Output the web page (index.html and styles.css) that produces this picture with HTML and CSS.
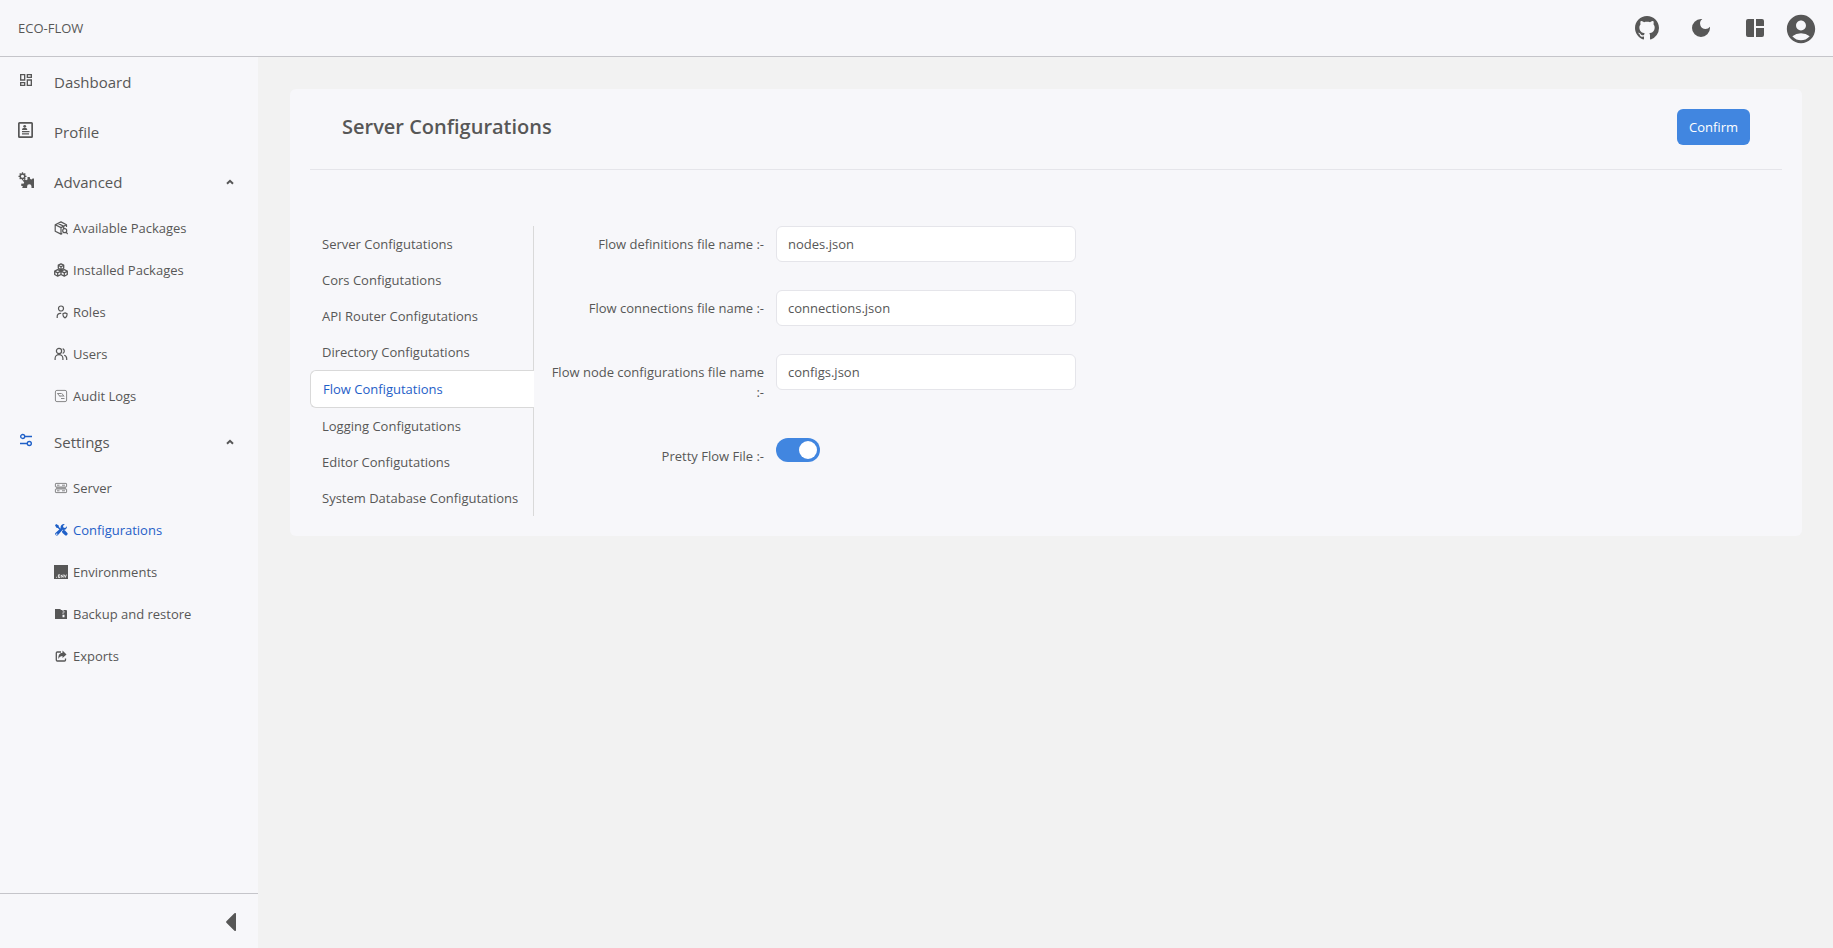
FILE: index.html
```html
<!DOCTYPE html>
<html lang="en">
<head>
<meta charset="utf-8">
<title>ECO-FLOW</title>
<link rel="stylesheet" href="styles.css">
</head>
<body>
<header class="topbar">
  <div class="brand">ECO-FLOW</div>
  <div class="tools">
    <button class="tool" type="button" aria-label="GitHub"><svg class="icon-lg" viewBox="0 0 16 16"><path d="M8 0C3.58 0 0 3.58 0 8c0 3.54 2.29 6.53 5.47 7.59.4.07.55-.17.55-.38 0-.19-.01-.82-.01-1.49-2.01.37-2.53-.49-2.69-.94-.09-.23-.48-.94-.82-1.13-.28-.15-.68-.52-.01-.53.63-.01 1.08.58 1.23.82.72 1.21 1.87.87 2.33.66.07-.52.28-.87.51-1.07-1.78-.2-3.64-.89-3.64-3.95 0-.87.31-1.59.82-2.15-.08-.2-.36-1.02.08-2.12 0 0 .67-.21 2.2.82.64-.18 1.32-.27 2-.27s1.36.09 2 .27c1.53-1.04 2.2-.82 2.2-.82.44 1.1.16 1.92.08 2.12.51.56.82 1.27.82 2.15 0 3.07-1.87 3.75-3.65 3.95.29.25.54.73.54 1.48 0 1.07-.01 1.93-.01 2.2 0 .21.15.46.55.38A8.01 8.01 0 0 0 16 8c0-4.42-3.58-8-8-8z"/></svg></button>
    <button class="tool" type="button" aria-label="Dark mode"><svg class="icon-lg" viewBox="0 0 24 24"><path d="M12 3a9 9 0 1 0 9 9c0-.46-.04-.92-.1-1.36a5.389 5.389 0 0 1-4.4 2.26 5.403 5.403 0 0 1-3.14-9.8c-.44-.06-.9-.1-1.36-.1z"/></svg></button>
    <button class="tool" type="button" aria-label="Layout"><svg class="icon-lg" viewBox="0 0 24 24"><path d="M11 21H5a2 2 0 0 1-2-2V5a2 2 0 0 1 2-2h6zM13 21h6a2 2 0 0 0 2-2v-7h-8zM21 10V5a2 2 0 0 0-2-2h-6v7z"/></svg></button>
    <button class="tool account" type="button" aria-label="Account"><svg class="icon-xl" viewBox="0 0 24 24"><path d="M12 2C6.480 2 2 6.480 2 12s4.480 10 10 10 10-4.480 10-10S17.520 2 12 2zm0 4c1.930 0 3.500 1.570 3.500 3.500S13.930 13 12 13s-3.500-1.570-3.500-3.500S10.070 6 12 6zm0 14c-2.030 0-4.430-.820-6.140-2.880a9.947 9.947 0 0 1 12.280 0C16.430 19.180 14.030 20 12 20z"/></svg></button>
  </div>
</header>
<div class="body">
  <aside class="sidebar">
    <nav class="nav">
      <a class="item" href="#"><svg class="icon" viewBox="0 0 24 24"><path d="M19 5v2h-4V5h4M9 5v6H5V5h4m10 8v6h-4v-6h4M9 17v2H5v-2h4M21 3h-8v6h8V3zM11 3H3v10h8V3zm10 8h-8v10h8V11zm-10 4H3v6h8v-6z"/></svg><span>Dashboard</span></a>
      <a class="item" href="#"><svg class="icon" viewBox="0 0 16 16"><path fill-rule="evenodd" d="M1.500 0h12A1.500 1.500 0 0 1 15 1.500v13a1.500 1.500 0 0 1-1.500 1.500h-12A1.500 1.500 0 0 1 0 14.500v-13A1.500 1.500 0 0 1 1.500 0zm.2 1.700v12.600h11.600V1.700z"/><circle cx="6.700" cy="4.300" r="1.400"/><path d="M4 8c0-1.500 1-2.200 2.700-2.200S9.300 6.500 9.300 8zM4 9h7.500v1.200H4zM4 11.200h7v1.200H4z"/></svg><span>Profile</span></a>
      <button class="item" type="button" aria-expanded="true"><svg class="icon" viewBox="0 0 16 16"><circle cx="4.500" cy="4.300" r="2.300" fill="none" stroke="currentColor" stroke-width="1.500"/><path d="M4.500 .3v2M4.500 6.300v2M.5 4.300h2M6.500 4.300h2M1.700 1.500l1.200 1.200M6.100 5.900l1.200 1.200M7.300 1.500L6.100 2.700M2.900 5.900L1.700 7.100" stroke="currentColor" stroke-width="1.300"/><path d="M4 16l1-1.500-2-1 .5-2 2 .2.700-1.500-1.500-1.500L6.500 7l1.600 1.200 1.400-.7V5h2.200l.5 2 1.300.5L15 6.200l1 .5V16h-2.500v-1.500a2.200 2.200 0 0 0-4.400 0V16z"/></svg><span>Advanced</span><svg class="caret" viewBox="0 0 8 6"><path d="M1 4.800L4 1.800l3 3" fill="none" stroke="currentColor" stroke-width="2"/></svg></button>
      <a class="sub" href="#"><svg class="icon-sm" viewBox="0 0 14 14"><g fill="none" stroke="currentColor" stroke-width="1.200" stroke-linejoin="round"><path d="M12.500 6V3.800L7 .9 1.200 3.800v6.400L7 13.100l1.300-.6M1.200 3.800L7 6.600l5.500-2.800M7 6.600v6.500M4 2.400l5.700 2.900V8"/><circle cx="10.700" cy="9.700" r="2"/><path d="M12.100 11.200l1.600 1.800"/></g></svg><span>Available Packages</span></a>
      <a class="sub" href="#"><svg class="icon-sm" viewBox="0 0 14 14"><g fill="none" stroke="currentColor" stroke-width="1.300" stroke-linejoin="round"><path d="M7 .8l2.700 1.400v3L7 6.700 4.300 5.200v-3zM4.300 2.200L7 3.700l2.700-1.500M7 3.700v3M3.700 6.700l3.300 1.500v3.300l-3.300 1.700-3-1.700V8.200zM.7 8.200l3 1.700L7 8.200M3.700 9.900v3.300M10.300 6.700l3 1.500v3.300l-3 1.700L7 11.500V8.200zM7 8.200l3.300 1.700 3-1.700M10.300 9.900v3.300"/></g></svg><span>Installed Packages</span></a>
      <a class="sub" href="#"><svg class="icon-sm" viewBox="0 0 14 14"><g fill="none" stroke="currentColor" stroke-width="1.200"><circle cx="7" cy="3.500" r="2.500"/><path d="M3.200 13v-1.600A3 3 0 0 1 6.200 8.300h1M11 7.900l2 .8v1.400c0 1.300-.7 2.200-2 2.800-1.300-.6-2-1.500-2-2.800V8.700z"/></g></svg><span>Roles</span></a>
      <a class="sub" href="#"><svg class="icon-sm" viewBox="0 0 14 14"><g fill="none" stroke="currentColor" stroke-width="1.200"><circle cx="5" cy="4" r="2.600"/><path d="M1.100 13v-1.500a3.900 3.900 0 0 1 7.800 0V13M8.700 1.600a2.600 2.600 0 0 1 0 4.800M10.200 8.300a3.600 3.600 0 0 1 2.500 3.400V13"/></g></svg><span>Users</span></a>
      <a class="sub" href="#"><svg class="icon-sm" viewBox="0 0 14 14"><g fill="none" stroke="currentColor" stroke-width=".7"><rect x="1.400" y="1.400" width="11.200" height="11.200" rx="1.500"/><path d="M3.500 4.500h4M5.500 7h4M7 9.500h3.500M3.500 4.500l2.500 3M8 4.500l2 3"/></g></svg><span>Audit Logs</span></a>
      <button class="item" type="button" aria-expanded="true"><svg class="icon accent" viewBox="0 0 16 16"><g fill="none" stroke="currentColor" stroke-width="1.300"><circle cx="4.700" cy="4.500" r="2"/><path d="M6.700 4.500H14M2 11.500h7.300M2 4.500h.7M13.300 11.500h.7"/><circle cx="11.300" cy="11.500" r="2"/></g></svg><span>Settings</span><svg class="caret" viewBox="0 0 8 6"><path d="M1 4.800L4 1.800l3 3" fill="none" stroke="currentColor" stroke-width="2"/></svg></button>
      <a class="sub" href="#"><svg class="icon-sm" viewBox="0 0 14 14"><g fill="none" stroke="currentColor" stroke-width=".7"><rect x="1.400" y="2.400" width="11.200" height="3.600" rx=".6"/><rect x="1.400" y="8" width="11.200" height="3.600" rx=".6"/><path d="M3 4.200h2.500M8 4.200h3M3 9.800h2.500M8 9.800h3M2 7h10"/></g></svg><span>Server</span></a>
      <a class="sub accent" href="#" aria-current="page"><svg class="icon-sm" viewBox="0 0 14 14"><path d="M1 2.200L2.200 1l2.500 1.500.2 1.400 2 2L5.900 7 3.800 4.900l-1.400-.2zM8 8.200l1.200-1.200 1.600.3 2.300 2.400a1.500 1.500 0 0 1-2.300 2.300L8.300 9.700z"/><path d="M13 3.200a3.400 3.400 0 0 1-4.300 3.600l-4.900 5.400a1.700 1.700 0 0 1-2.400-2.300l5.300-4.700A3.400 3.400 0 0 1 10.800 1L9 2.900l.4 1.700 1.700.4zM2.700 10.500a.7.7 0 1 0 .1 0z" fill-rule="evenodd"/></svg><span>Configurations</span></a>
      <a class="sub" href="#"><svg class="icon-sm" viewBox="0 0 14 14"><path d="M0 0h14v14H0z"/><path d="M2 12.300h.9M6 9.800H4.400v2.700H6M4.400 11.100h1.400M7.200 12.800V9.900l1.900 2.500V9.500M10.200 9.600l1.100 2.800 1.100-2.800" fill="none" stroke="#fff" stroke-width=".8"/></svg><span>Environments</span></a>
      <a class="sub" href="#"><svg class="icon-sm" viewBox="0 0 14 14"><path fill-rule="evenodd" d="M1 2h5l1.200 1H12a1 1 0 0 1 1 1v8H1zM8.500 3v1.200h1V3zm1 1.200v1.300h1V4.200zM8.500 5.500v1.200h1V5.500zm0 2.300v2.500h2V7.800z"/></svg><span>Backup and restore</span></a>
      <a class="sub" href="#"><svg class="icon-sm" viewBox="0 0 14 14"><path d="M7 3H3.300A1 1 0 0 0 2.300 4v7a1 1 0 0 0 1 1h7.200a1 1 0 0 0 1-1V9.500" fill="none" stroke="currentColor" stroke-width="1.300"/><path d="M8.500 1.500L12.500 5.500 8.500 9V7C6.500 7 5.500 7.800 4.500 10 4 6.500 5.500 4 8.500 3.800z"/></svg><span>Exports</span></a>
    </nav>
    <div class="side-foot"><button class="tool" type="button" aria-label="Collapse sidebar"><svg class="collapse" viewBox="0 0 12 20"><path d="M12 1v18a1 1 0 0 1-1.700.6L1.500 10.700a1 1 0 0 1 0-1.400L10.300.4A1 1 0 0 1 12 1z"/></svg></button></div>
  </aside>
  <main class="main">
    <section class="card">
      <div class="card-head">
        <h1 class="title">Server Configurations</h1>
        <button class="confirm" type="submit" form="flow-form">Confirm</button>
      </div>
      <div class="content">
        <nav class="tabs">
          <a class="tab" href="#">Server Configutations</a>
          <a class="tab" href="#">Cors Configutations</a>
          <a class="tab" href="#">API Router Configutations</a>
          <a class="tab" href="#">Directory Configutations</a>
          <a class="tab active" href="#" aria-current="true">Flow Configutations</a>
          <a class="tab" href="#">Logging Configutations</a>
          <a class="tab" href="#">Editor Configutations</a>
          <a class="tab" href="#">System Database Configutations</a>
        </nav>
        <form class="form" id="flow-form">
          <div class="row"><label class="label" for="definitions">Flow definitions file name :-</label><input class="field" id="definitions" type="text" value="nodes.json"></div>
          <div class="row"><label class="label" for="connections">Flow connections file name :-</label><input class="field" id="connections" type="text" value="connections.json"></div>
          <div class="row"><label class="label" for="configs">Flow node configurations file name :-</label><input class="field" id="configs" type="text" value="configs.json"></div>
          <div class="row"><label class="label" for="pretty">Pretty Flow File :-</label><input class="switch" id="pretty" type="checkbox" role="switch" checked></div>
        </form>
      </div>
    </section>
  </main>
</div>
</body>
</html>
```

FILE: styles.css
```css
* { box-sizing: border-box; }

body {
  margin: 0;
  min-height: 100vh;
  display: flex;
  flex-direction: column;
  background: #f2f2f2;
  color: #575757;
  font: 13px/20px "Segoe UI", "Open Sans", "Noto Sans", sans-serif;
}

a { color: inherit; text-decoration: none; }
button, input { font: inherit; color: inherit; }
svg { display: block; fill: currentColor; flex: none; }

.topbar {
  display: flex;
  align-items: center;
  justify-content: space-between;
  height: 57px;
  padding: 0 15px 0 18px;
  background: #f7f7fa;
  border-bottom: 1px solid #c5c5ca;
}
.tools { display: flex; align-items: center; gap: 30px; }
.tool { border: 0; padding: 0; background: none; cursor: pointer; }
.account { margin: 2px 0 0 -13px; }
.icon-lg { width: 24px; height: 24px; }
.icon-xl { width: 34px; height: 34px; }

.body { flex: 1; display: flex; }

.sidebar {
  width: 258px;
  flex: none;
  display: flex;
  flex-direction: column;
  background: #f7f7fa;
}
.nav { flex: 1; }
.item {
  display: flex;
  align-items: center;
  gap: 20px;
  width: 100%;
  height: 50px;
  padding: 0 24px 0 18px;
  border: 0;
  background: none;
  font-size: 15px;
  text-align: left;
}
.item .icon { margin-bottom: 4px; }
.icon { width: 16px; height: 16px; }
.caret { width: 8px; height: 6px; margin-left: auto; }
.sub {
  display: flex;
  align-items: center;
  gap: 5px;
  height: 42px;
  padding-left: 54px;
}
.icon-sm { width: 14px; height: 14px; }
.accent { color: #1f60c8; }
.side-foot {
  display: flex;
  align-items: center;
  justify-content: flex-end;
  height: 55px;
  padding: 2px 22px 0 0;
  border-top: 1px solid #c5c5ca;
}
.collapse { width: 11px; height: 20px; }

.main { flex: 1; min-width: 0; padding: 32px 31px 32px 32px; }
.card { padding: 0 20px 20px; background: #f7f7fa; border-radius: 6px; }
.card-head {
  display: flex;
  align-items: center;
  justify-content: space-between;
  padding: 20px 32px 24px;
  border-bottom: 1px solid #e5e5ea;
}
.title { margin: 0; font-size: 20px; line-height: 36px; font-weight: 600; }
.confirm {
  height: 36px;
  padding: 0 12px;
  border: 0;
  border-radius: 6px;
  background: #4186e0;
  color: #fff;
}

.content { display: flex; padding-top: 56px; }
.tabs {
  width: 224px;
  flex: none;
  display: flex;
  flex-direction: column;
  background: linear-gradient(#d9d9d9, #d9d9d9) right / 1px 100% no-repeat;
}
.tab { padding: 8px 12px; }
.active {
  border: 1px solid #d9d9d9;
  border-right: 0;
  border-radius: 6px 0 0 6px;
  background: #fff;
  color: #1f60c8;
}

.form {
  flex: 1;
  display: flex;
  flex-direction: column;
  gap: 28px;
  padding-left: 12px;
}
.row { display: flex; align-items: flex-start; gap: 12px; }
.label { width: 218px; padding: 8px 0; text-align: right; }
.field {
  width: 300px;
  height: 36px;
  padding: 0 11px;
  border: 1px solid #e5e5ea;
  border-radius: 6px;
  background: #fff;
}
.switch {
  appearance: none;
  display: flex;
  align-items: center;
  justify-content: flex-end;
  width: 44px;
  height: 24px;
  margin: 0;
  padding: 3px;
  border-radius: 12px;
  background: #4186e0;
}
.switch::before {
  content: "";
  width: 18px;
  height: 18px;
  border-radius: 50%;
  background: #fff;
}
```
